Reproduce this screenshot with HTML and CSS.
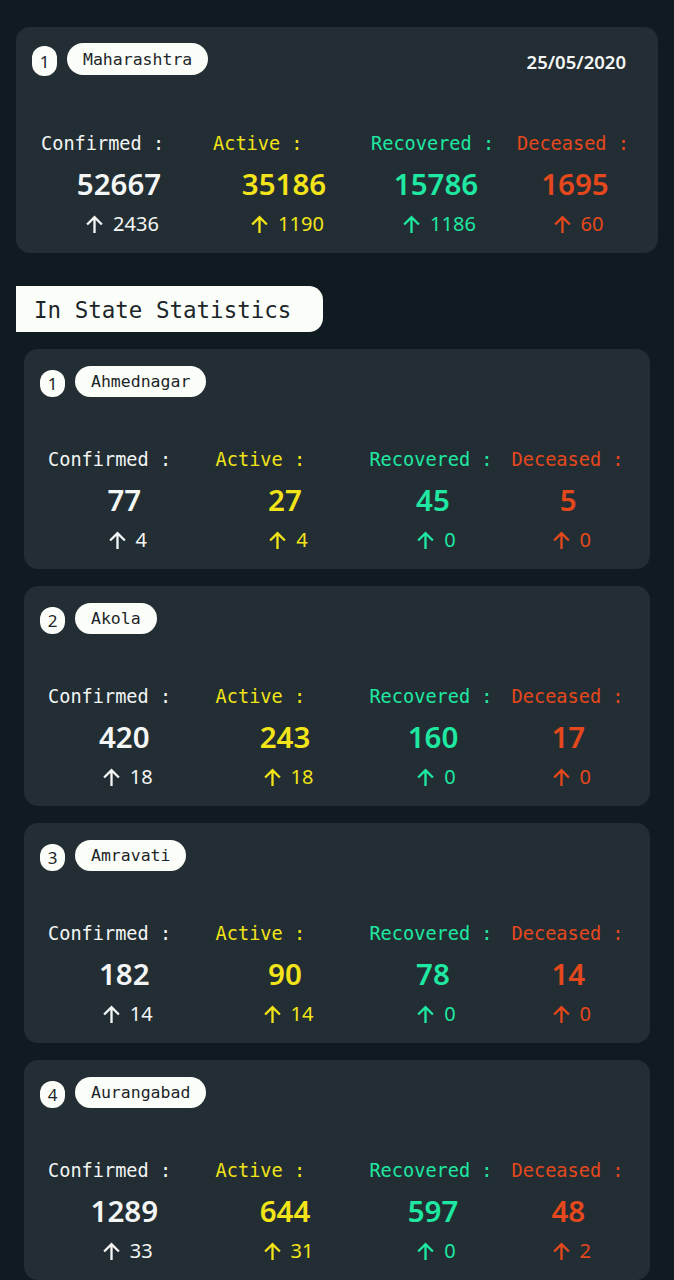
FILE: index.html
```html
<!DOCTYPE html>
<html>
<head>
<meta charset="utf-8">
<link rel="stylesheet" href="styles.css">
</head>
<body>
<div class="page">
  <section class="card main">
    <div class="head">
      <span class="idx">1</span>
      <span class="name">Maharashtra</span>
      <span class="date">25/05/2020</span>
    </div>
    <div class="stats">
      <div class="lbl c">Confirmed :</div>
      <div class="lbl a">Active :</div>
      <div class="lbl r">Recovered :</div>
      <div class="lbl d">Deceased :</div>
      <div class="num c">52667</div>
      <div class="num a">35186</div>
      <div class="num r">15786</div>
      <div class="num d">1695</div>
      <div class="delta c"><svg viewBox="0 0 18 18"><path d="M9 17V2M2 9l7-7 7 7"/></svg>2436</div>
      <div class="delta a"><svg viewBox="0 0 18 18"><path d="M9 17V2M2 9l7-7 7 7"/></svg>1190</div>
      <div class="delta r"><svg viewBox="0 0 18 18"><path d="M9 17V2M2 9l7-7 7 7"/></svg>1186</div>
      <div class="delta d"><svg viewBox="0 0 18 18"><path d="M9 17V2M2 9l7-7 7 7"/></svg>60</div>
    </div>
  </section>

  <h2 class="section-title">In State Statistics</h2>

  <section class="card sub">
    <div class="head">
      <span class="idx">1</span>
      <span class="name">Ahmednagar</span>
    </div>
    <div class="stats">
      <div class="lbl c">Confirmed :</div>
      <div class="lbl a">Active :</div>
      <div class="lbl r">Recovered :</div>
      <div class="lbl d">Deceased :</div>
      <div class="num c">77</div>
      <div class="num a">27</div>
      <div class="num r">45</div>
      <div class="num d">5</div>
      <div class="delta c"><svg viewBox="0 0 18 18"><path d="M9 17V2M2 9l7-7 7 7"/></svg>4</div>
      <div class="delta a"><svg viewBox="0 0 18 18"><path d="M9 17V2M2 9l7-7 7 7"/></svg>4</div>
      <div class="delta r"><svg viewBox="0 0 18 18"><path d="M9 17V2M2 9l7-7 7 7"/></svg>0</div>
      <div class="delta d"><svg viewBox="0 0 18 18"><path d="M9 17V2M2 9l7-7 7 7"/></svg>0</div>
    </div>
  </section>

  <section class="card sub">
    <div class="head">
      <span class="idx">2</span>
      <span class="name">Akola</span>
    </div>
    <div class="stats">
      <div class="lbl c">Confirmed :</div>
      <div class="lbl a">Active :</div>
      <div class="lbl r">Recovered :</div>
      <div class="lbl d">Deceased :</div>
      <div class="num c">420</div>
      <div class="num a">243</div>
      <div class="num r">160</div>
      <div class="num d">17</div>
      <div class="delta c"><svg viewBox="0 0 18 18"><path d="M9 17V2M2 9l7-7 7 7"/></svg>18</div>
      <div class="delta a"><svg viewBox="0 0 18 18"><path d="M9 17V2M2 9l7-7 7 7"/></svg>18</div>
      <div class="delta r"><svg viewBox="0 0 18 18"><path d="M9 17V2M2 9l7-7 7 7"/></svg>0</div>
      <div class="delta d"><svg viewBox="0 0 18 18"><path d="M9 17V2M2 9l7-7 7 7"/></svg>0</div>
    </div>
  </section>

  <section class="card sub">
    <div class="head">
      <span class="idx">3</span>
      <span class="name">Amravati</span>
    </div>
    <div class="stats">
      <div class="lbl c">Confirmed :</div>
      <div class="lbl a">Active :</div>
      <div class="lbl r">Recovered :</div>
      <div class="lbl d">Deceased :</div>
      <div class="num c">182</div>
      <div class="num a">90</div>
      <div class="num r">78</div>
      <div class="num d">14</div>
      <div class="delta c"><svg viewBox="0 0 18 18"><path d="M9 17V2M2 9l7-7 7 7"/></svg>14</div>
      <div class="delta a"><svg viewBox="0 0 18 18"><path d="M9 17V2M2 9l7-7 7 7"/></svg>14</div>
      <div class="delta r"><svg viewBox="0 0 18 18"><path d="M9 17V2M2 9l7-7 7 7"/></svg>0</div>
      <div class="delta d"><svg viewBox="0 0 18 18"><path d="M9 17V2M2 9l7-7 7 7"/></svg>0</div>
    </div>
  </section>

  <section class="card sub">
    <div class="head">
      <span class="idx">4</span>
      <span class="name">Aurangabad</span>
    </div>
    <div class="stats">
      <div class="lbl c">Confirmed :</div>
      <div class="lbl a">Active :</div>
      <div class="lbl r">Recovered :</div>
      <div class="lbl d">Deceased :</div>
      <div class="num c">1289</div>
      <div class="num a">644</div>
      <div class="num r">597</div>
      <div class="num d">48</div>
      <div class="delta c"><svg viewBox="0 0 18 18"><path d="M9 17V2M2 9l7-7 7 7"/></svg>33</div>
      <div class="delta a"><svg viewBox="0 0 18 18"><path d="M9 17V2M2 9l7-7 7 7"/></svg>31</div>
      <div class="delta r"><svg viewBox="0 0 18 18"><path d="M9 17V2M2 9l7-7 7 7"/></svg>0</div>
      <div class="delta d"><svg viewBox="0 0 18 18"><path d="M9 17V2M2 9l7-7 7 7"/></svg>2</div>
    </div>
  </section>
</div>
</body>
</html>
```

FILE: styles.css
```css
html, body {
  margin: 0;
  padding: 0;
  background: #0f1b20;
}
body {
  font-family: "Noto Sans", "Open Sans", sans-serif;
  color: #ffffff;
}
.page {
  padding: 27px 16px 0;
  display: flex;
  flex-direction: column;
}
.card {
  background: #222e33;
  border-radius: 14px;
}
.main {
  padding: 16px 25px 17px 16px;
}
.sub {
  margin: 0 8px 17px;
  padding: 17px 25px 17px 16px;
}
.head {
  display: flex;
  align-items: flex-start;
  gap: 10px;
  height: 32px;
}
.sub .head {
  height: 31px;
}
.idx {
  width: 25px;
  height: 30px;
  margin-top: 3px;
  background: #fbfdf8;
  color: #1c2529;
  border-radius: 12px;
  display: flex;
  align-items: center;
  justify-content: center;
  font-size: 17px;
  line-height: 1;
}
.sub .idx {
  height: 27px;
  margin-top: 4px;
}
.name {
  height: 32px;
  padding: 0 16px;
  background: #fbfdf8;
  color: #1c2529;
  border-radius: 16px;
  font-family: "DejaVu Sans Mono", "Liberation Mono", monospace;
  font-size: 16.5px;
  display: flex;
  align-items: center;
}
.sub .name {
  height: 31px;
}
.date {
  margin-left: auto;
  margin-right: 7px;
  margin-top: 6px;
  font-size: 18.5px;
  font-weight: 600;
  line-height: 26px;
  color: #f4f6f5;
}
.stats {
  display: grid;
  grid-template-columns: minmax(0, 156fr) minmax(0, 142fr) minmax(0, 130fr) minmax(0, 116fr);
  column-gap: 16px;
  padding-left: 9px;
  margin-top: 56px;
}
.sub .stats {
  column-gap: 15px;
  padding-left: 8px;
  margin-top: 50px;
}
.lbl {
  font-family: "DejaVu Sans Mono", "Liberation Mono", monospace;
  font-size: 18.6px;
  line-height: 24px;
  white-space: nowrap;
  padding-top: 1px;
  margin-bottom: -1px;
}
.num {
  margin-top: 11px;
  text-align: center;
  font-size: 29.5px;
  font-weight: 600;
  line-height: 36px;
}
.delta {
  margin-top: 10px;
  display: flex;
  align-items: center;
  justify-content: center;
  gap: 9px;
  font-size: 20px;
  line-height: 24px;
  padding-left: 6px;
}
.delta svg {
  width: 19px;
  height: 19px;
  fill: none;
  stroke: currentColor;
  stroke-width: 2.2;
}
.c { color: #f4f6f5; }
.a { color: #f2e419; }
.r { color: #1fe8a2; }
.d { color: #e5481c; }
.section-title {
  align-self: flex-start;
  margin: 33px 0 17px;
  width: 307px;
  box-sizing: border-box;
  height: 46px;
  padding: 2px 0 0 18px;
  background: #fbfdf8;
  color: #1c2529;
  border-radius: 0 14px 14px 0;
  font-family: "DejaVu Sans Mono", "Liberation Mono", monospace;
  font-weight: normal;
  font-size: 22.5px;
  line-height: 44px;
}
```
